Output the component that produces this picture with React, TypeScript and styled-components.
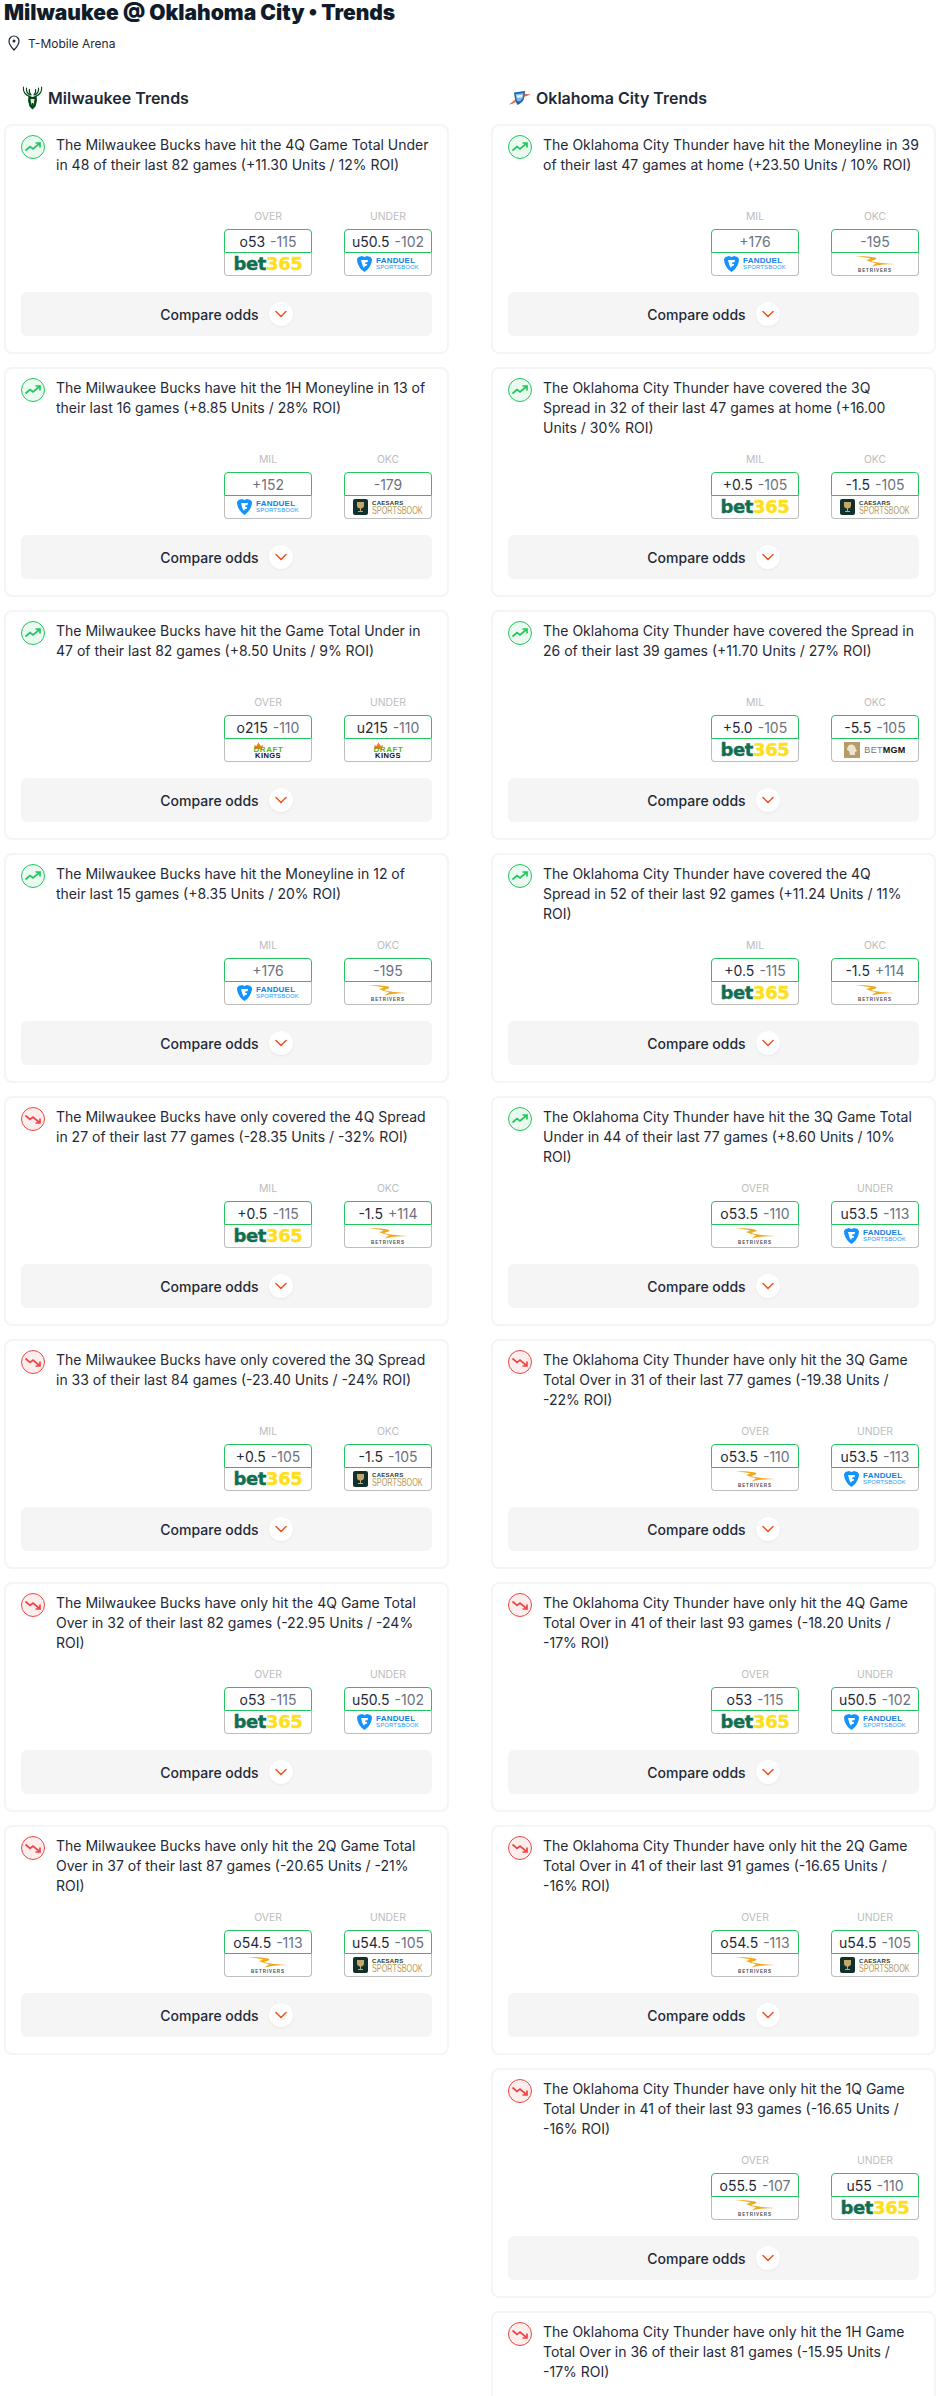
import type { FC } from "react";
import styled, { createGlobalStyle } from "styled-components";

const GlobalStyle = createGlobalStyle`
  html, body {
    margin: 0;
    height: 2396px;
    overflow: hidden;
    background: #ffffff;
  }
  body {
    font-family: Inter, "Noto Sans", sans-serif;
    color: #1f2937;
  }
  * {
    box-sizing: border-box;
  }
`;

const Page = styled.div`
  width: 939px;
  height: 2396px;
  overflow: hidden;
  padding: 0 3px 0 4px;
`;

const Title = styled.h1`
  margin: 0;
  font-size: 21px;
  line-height: 26px;
  font-weight: 900;
  color: #111c2a;
  white-space: nowrap;
`;

const Location = styled.div`
  display: flex;
  align-items: center;
  gap: 8px;
  height: 18px;
  margin-top: 8px;
  padding-left: 4px;
  font-size: 12px;
  color: #1f2937;
`;

const Columns = styled.div`
  display: grid;
  grid-template-columns: 445px 445px;
  justify-content: space-between;
  margin-top: 34px;
`;

const Column = styled.section`
  display: flex;
  flex-direction: column;
  gap: 13px;
`;

const ColumnHeading = styled.h2`
  display: flex;
  align-items: center;
  gap: 5px;
  height: 24px;
  margin: 0 0 1px;
  padding-left: 18px;
  font-size: 16px;
  font-weight: 600;
  color: #1f2937;
`;

const Card = styled.article`
  display: flex;
  flex-direction: column;
  height: 230px;
  padding: 9px 15px 15px;
  background: #ffffff;
  border: 2px solid #f5f5f5;
  border-radius: 8px;
`;

const Summary = styled.div`
  display: flex;
  gap: 11px;
  height: 74px;
`;

const TrendBadge = styled.div`
  flex: none;
  width: 24px;
  height: 24px;
`;

const SummaryText = styled.p`
  margin: 0;
  font-size: 14px;
  line-height: 20px;
  color: #1f2937;
`;

const Market = styled.div`
  display: flex;
  justify-content: flex-end;
  gap: 32px;
  margin-top: 1px;
`;

const Offer = styled.div`
  display: flex;
  flex-direction: column;
  align-items: center;
  width: 88px;
`;

const OfferLabel = styled.div`
  height: 14px;
  margin-bottom: 5px;
  font-size: 10.4px;
  line-height: 14px;
  color: #bdbdbd;
`;

const Price = styled.div`
  display: flex;
  align-items: center;
  justify-content: center;
  gap: 5px;
  width: 100%;
  height: 24px;
  font-size: 14px;
  color: #1f2937;
  border: 1px solid #22c55e;
  border-radius: 4px 4px 0 0;
`;

const Juice = styled.span`
  color: #6b7280;
`;

const BookPanel = styled.div`
  display: flex;
  align-items: center;
  justify-content: center;
  width: 100%;
  height: 23px;
  overflow: hidden;
  border: 1px solid #bdbdbd;
  border-top: 0;
  border-radius: 0 0 4px 4px;
`;

const CompareBar = styled.div`
  display: flex;
  align-items: center;
  justify-content: center;
  gap: 10px;
  height: 44px;
  margin-top: 16px;
  background: #f5f5f5;
  border-radius: 6px;
  font-size: 14px;
  font-weight: 500;
  color: #1f2937;
`;

const ChevronCircle = styled.div`
  display: flex;
  align-items: center;
  justify-content: center;
  width: 24px;
  height: 24px;
  background: #ffffff;
  border-radius: 50%;
  box-shadow: 0 1px 3px rgba(0, 0, 0, 0.06);
`;

const Bet365Mark = styled.div`
  font-family: "DejaVu Sans", sans-serif;
  font-size: 18px;
  font-weight: 700;
  line-height: 20px;
  letter-spacing: -0.4px;
  color: #126e51;
  -webkit-text-stroke: 0.4px currentColor;
`;

const Bet365Digits = styled.span`
  color: #ffdf1b;
`;

const LogoRow = styled.div`
  display: flex;
  align-items: center;
  gap: 4px;
`;

const WordStack = styled.div`
  display: flex;
  flex-direction: column;
  font-family: "Liberation Sans", sans-serif;
`;

const FanduelName = styled.div`
  font-size: 8px;
  line-height: 7px;
  font-weight: 700;
  letter-spacing: 0.2px;
  color: #1381e0;
`;

const FanduelSub = styled.div`
  font-size: 6px;
  line-height: 7px;
  letter-spacing: 0.1px;
  color: #1c9bff;
`;

const RiversStack = styled.div`
  display: flex;
  flex-direction: column;
  align-items: center;
  gap: 1px;
`;

const RiversName = styled.div`
  font-family: "Liberation Sans", sans-serif;
  font-size: 4.5px;
  line-height: 5px;
  font-weight: 700;
  letter-spacing: 0.9px;
  color: #4b4f54;
`;

const CaesarsName = styled.div`
  font-size: 6px;
  line-height: 6px;
  font-weight: 700;
  letter-spacing: 0.3px;
  color: #1b3a34;
`;

const CaesarsSub = styled.div`
  width: 51px;
  font-size: 11px;
  line-height: 9px;
  color: #b99a5b;
  white-space: nowrap;
  transform: scaleX(0.66);
  transform-origin: left center;
`;

const KingsLogo = styled.div`
  display: flex;
  flex-direction: column;
  align-items: center;
  width: 31px;
  font-family: "Liberation Sans", sans-serif;
  font-weight: 700;
`;

const KingsCrown = styled.svg`
  align-self: flex-start;
`;

const KingsDraft = styled.div`
  z-index: 1;
  align-self: flex-end;
  margin-top: -2px;
  font-size: 8px;
  line-height: 6px;
  letter-spacing: 0.6px;
  color: #61b510;
`;

const KingsName = styled.div`
  font-size: 7.5px;
  line-height: 5px;
  letter-spacing: 0.4px;
  color: #111111;
`;

const MgmWord = styled.div`
  font-family: "Liberation Sans", sans-serif;
  font-size: 9px;
  letter-spacing: 0.3px;
  color: #777777;
`;

const MgmStrong = styled.span`
  font-weight: 700;
  color: #111111;
`;

const PinIcon: FC = () => (
  <svg width="12" height="16" viewBox="0 0 12 16" fill="none">
    <path
      d="M6 15C4 12.8 1 9.8 1 6.2 1 3.3 3.2 1 6 1s5 2.3 5 5.2c0 3.6-3 6.6-5 8.8Z"
      stroke="#1f2937"
      strokeWidth="1.2"
    />
    <circle cx="6" cy="6" r="1.5" fill="#1f2937" />
  </svg>
);

const BucksLogo: FC = () => (
  <svg width="21" height="24" viewBox="0 0 21 24" fill="none">
    <g stroke="#00471b" strokeWidth="1.1" strokeLinecap="round">
      <path d="M1.500 1C.8 5 3 8.500 7.500 10.500" />
      <path d="M4.500 2C4 4.500 5 7 8 9" />
      <path d="M7.500 3.500C7 5.500 7.500 7.500 9 9" />
      <path d="M19.500 1C20.200 5 18 8.500 13.500 10.500" />
      <path d="M16.500 2C17 4.500 16 7 13 9" />
      <path d="M13.500 3.500C14 5.500 13.500 7.500 12 9" />
    </g>
    <path d="M6.500 9.500 10.500 11l4-1.500.5 5-1.500 6-3 3-3-3-1.500-6Z" fill="#00471b" />
    <path d="M8.500 13h4l-.7 5-1.300 1.500L9.200 18Z" fill="#eee1c6" />
    <path d="M9.700 17h1.600v2.500H9.700Z" fill="#00471b" />
  </svg>
);

const ThunderLogo: FC = () => (
  <svg width="22" height="16" viewBox="0 0 22 16">
    <path d="M0 14.500 7 9l1 2.500-5 2.500-3 .5Z" fill="#ef6c3a" />
    <path d="M14 3.500l8 1-7.500 2.500-.5-3.500Z" fill="#ef6c3a" />
    <path d="M5 2.500 16 1l-1 8c-1 2.500-4 5-6.500 6C6.500 12 5.500 7 5 2.500Z" fill="#1d5fa8" />
    <path d="M6.500 4 14.500 3l-.5 5-3 3.500L8 11 6.500 4Z" fill="#7eb6e6" />
    <path d="M7.500 5.500l6-.7-.3 2.400-5.200.5Z" fill="#f2f6fb" />
  </svg>
);

const TrendIcon: FC<{ $dir: "up" | "down" }> = ({ $dir }) => {
  const color = $dir === "up" ? "#22c55e" : "#ef4444";
  const fill = $dir === "up" ? "#eafaf0" : "#fdeeee";
  return (
    <svg width="24" height="24" viewBox="0 0 24 24" fill="none">
      <circle cx="12" cy="12" r="11.500" fill={fill} stroke={color} />
      {$dir === "up" ? (
        <path
          d="M4.500 15.500 9 11.500l3 2.500 6.500-5.500M14.500 8h4.500v4.500"
          stroke={color}
          strokeWidth="1.700"
        />
      ) : (
        <path
          d="M4.500 8.500 9 12.500l3-2.500 6.500 5.500M19 11.500V16h-4.500"
          stroke={color}
          strokeWidth="1.700"
        />
      )}
    </svg>
  );
};

const Chevron: FC = () => (
  <svg width="12" height="8" viewBox="0 0 12 8" fill="none">
    <path
      d="M1 1.500 6 6.500l5-5"
      stroke="#f4511e"
      strokeWidth="1.500"
      strokeLinecap="round"
      strokeLinejoin="round"
    />
  </svg>
);

type Book = "bet365" | "fanduel" | "rivers" | "caesars" | "kings" | "mgm";

const BookLogo: FC<{ book: Book }> = ({ book }) => {
  if (book === "bet365") {
    return (
      <Bet365Mark>
        bet<Bet365Digits>365</Bet365Digits>
      </Bet365Mark>
    );
  }
  if (book === "fanduel") {
    return (
      <LogoRow>
        <svg width="15" height="16" viewBox="0 0 15 16">
          <path
            d="M1.500 1 5 0l2.500 1L10 0l3.500 1L15 3c0 5-3 10-7.500 13C3 13 0 8 0 3Z"
            fill="#1493ff"
          />
          <path d="M4 4h7l-.5 2.200H8.500l-.3 1.800h2l-.8 2H7.800L7 12 5.500 9.500 4 4Z" fill="#fff" />
        </svg>
        <WordStack>
          <FanduelName>FANDUEL</FanduelName>
          <FanduelSub>SPORTSBOOK</FanduelSub>
        </WordStack>
      </LogoRow>
    );
  }
  if (book === "rivers") {
    return (
      <RiversStack>
        <svg width="40" height="11" viewBox="0 0 40 11">
          <path
            d="M0 .5C6 0 14 .5 20 1.500 22 2 22 3.500 19 4L16 5C19 6 24 7 40 8 30 8.500 22 8.800 17 10.500 18 9 20 8 21 7.200 18 6.500 14 5.500 11 4 14 3.200 15.500 3 15 2.400 12 1.500 6 .8 0 .5Z"
            fill="#f2a81d"
          />
        </svg>
        <RiversName>BETRIVERS</RiversName>
      </RiversStack>
    );
  }
  if (book === "caesars") {
    return (
      <LogoRow>
        <svg width="15" height="16" viewBox="0 0 15 16">
          <rect width="15" height="16" rx="2" fill="#12312c" />
          <path d="M4 3h7v3.500C11 8.500 9.500 9.500 8 9.500V12h2v1H5v-1h2V9.500C5.500 9.500 4 8.500 4 6.500Z" fill="#c5a868" />
        </svg>
        <WordStack>
          <CaesarsName>CAESARS</CaesarsName>
          <CaesarsSub>SPORTSBOOK</CaesarsSub>
        </WordStack>
      </LogoRow>
    );
  }
  if (book === "kings") {
    return (
      <KingsLogo>
        <KingsCrown width="11" height="7" viewBox="0 0 12 8">
          <path d="M1 3l2.500 1.500L6 .5l2.500 4L11 3l-1 5H2Z" fill="#f27b1a" />
        </KingsCrown>
        <KingsDraft>DRAFT</KingsDraft>
        <KingsName>KINGS</KingsName>
      </KingsLogo>
    );
  }
  return (
    <LogoRow>
      <svg width="16" height="16" viewBox="0 0 16 16">
        <rect width="16" height="16" fill="#b79c68" />
        <path d="M5 3c3-1.500 6 0 6.500 3L13 9l-2 1 0 3H6l-1-4-2-1c0-2 1-4 2-5Z" fill="#efe4cd" />
      </svg>
      <MgmWord>
        BET<MgmStrong>MGM</MgmStrong>
      </MgmWord>
    </LogoRow>
  );
};

type OfferData = { label: string; line?: string; price: string; book: Book };

type Trend = {
  text: string;
  dir: "up" | "down";
  offers?: [OfferData, OfferData];
};

const ou = (
  over: string,
  overPrice: string,
  overBook: Book,
  under: string,
  underPrice: string,
  underBook: Book
): [OfferData, OfferData] => [
  { label: "OVER", line: over, price: overPrice, book: overBook },
  { label: "UNDER", line: under, price: underPrice, book: underBook },
];

const sides = (
  milLine: string | undefined,
  milPrice: string,
  milBook: Book,
  okcLine: string | undefined,
  okcPrice: string,
  okcBook: Book
): [OfferData, OfferData] => [
  { label: "MIL", line: milLine, price: milPrice, book: milBook },
  { label: "OKC", line: okcLine, price: okcPrice, book: okcBook },
];

const milwaukee: Trend[] = [
  {
    text: "The Milwaukee Bucks have hit the 4Q Game Total Under in 48 of their last 82 games (+11.30 Units / 12% ROI)",
    dir: "up",
    offers: ou("o53", "-115", "bet365", "u50.5", "-102", "fanduel"),
  },
  {
    text: "The Milwaukee Bucks have hit the 1H Moneyline in 13 of their last 16 games (+8.85 Units / 28% ROI)",
    dir: "up",
    offers: sides(undefined, "+152", "fanduel", undefined, "-179", "caesars"),
  },
  {
    text: "The Milwaukee Bucks have hit the Game Total Under in 47 of their last 82 games (+8.50 Units / 9% ROI)",
    dir: "up",
    offers: ou("o215", "-110", "kings", "u215", "-110", "kings"),
  },
  {
    text: "The Milwaukee Bucks have hit the Moneyline in 12 of their last 15 games (+8.35 Units / 20% ROI)",
    dir: "up",
    offers: sides(undefined, "+176", "fanduel", undefined, "-195", "rivers"),
  },
  {
    text: "The Milwaukee Bucks have only covered the 4Q Spread in 27 of their last 77 games (-28.35 Units / -32% ROI)",
    dir: "down",
    offers: sides("+0.5", "-115", "bet365", "-1.5", "+114", "rivers"),
  },
  {
    text: "The Milwaukee Bucks have only covered the 3Q Spread in 33 of their last 84 games (-23.40 Units / -24% ROI)",
    dir: "down",
    offers: sides("+0.5", "-105", "bet365", "-1.5", "-105", "caesars"),
  },
  {
    text: "The Milwaukee Bucks have only hit the 4Q Game Total Over in 32 of their last 82 games (-22.95 Units / -24% ROI)",
    dir: "down",
    offers: ou("o53", "-115", "bet365", "u50.5", "-102", "fanduel"),
  },
  {
    text: "The Milwaukee Bucks have only hit the 2Q Game Total Over in 37 of their last 87 games (-20.65 Units / -21% ROI)",
    dir: "down",
    offers: ou("o54.5", "-113", "rivers", "u54.5", "-105", "caesars"),
  },
];

const oklahoma: Trend[] = [
  {
    text: "The Oklahoma City Thunder have hit the Moneyline in 39 of their last 47 games at home (+23.50 Units / 10% ROI)",
    dir: "up",
    offers: sides(undefined, "+176", "fanduel", undefined, "-195", "rivers"),
  },
  {
    text: "The Oklahoma City Thunder have covered the 3Q Spread in 32 of their last 47 games at home (+16.00 Units / 30% ROI)",
    dir: "up",
    offers: sides("+0.5", "-105", "bet365", "-1.5", "-105", "caesars"),
  },
  {
    text: "The Oklahoma City Thunder have covered the Spread in 26 of their last 39 games (+11.70 Units / 27% ROI)",
    dir: "up",
    offers: sides("+5.0", "-105", "bet365", "-5.5", "-105", "mgm"),
  },
  {
    text: "The Oklahoma City Thunder have covered the 4Q Spread in 52 of their last 92 games (+11.24 Units / 11% ROI)",
    dir: "up",
    offers: sides("+0.5", "-115", "bet365", "-1.5", "+114", "rivers"),
  },
  {
    text: "The Oklahoma City Thunder have hit the 3Q Game Total Under in 44 of their last 77 games (+8.60 Units / 10% ROI)",
    dir: "up",
    offers: ou("o53.5", "-110", "rivers", "u53.5", "-113", "fanduel"),
  },
  {
    text: "The Oklahoma City Thunder have only hit the 3Q Game Total Over in 31 of their last 77 games (-19.38 Units / -22% ROI)",
    dir: "down",
    offers: ou("o53.5", "-110", "rivers", "u53.5", "-113", "fanduel"),
  },
  {
    text: "The Oklahoma City Thunder have only hit the 4Q Game Total Over in 41 of their last 93 games (-18.20 Units / -17% ROI)",
    dir: "down",
    offers: ou("o53", "-115", "bet365", "u50.5", "-102", "fanduel"),
  },
  {
    text: "The Oklahoma City Thunder have only hit the 2Q Game Total Over in 41 of their last 91 games (-16.65 Units / -16% ROI)",
    dir: "down",
    offers: ou("o54.5", "-113", "rivers", "u54.5", "-105", "caesars"),
  },
  {
    text: "The Oklahoma City Thunder have only hit the 1Q Game Total Under in 41 of their last 93 games (-16.65 Units / -16% ROI)",
    dir: "down",
    offers: ou("o55.5", "-107", "rivers", "u55", "-110", "bet365"),
  },
  {
    // the rest of this card is below the fold
    text: "The Oklahoma City Thunder have only hit the 1H Game Total Over in 36 of their last 81 games (-15.95 Units / -17% ROI)",
    dir: "down",
  },
];

const TrendCard: FC<{ trend: Trend }> = ({ trend }) => (
  <Card>
    <Summary>
      <TrendBadge>
        <TrendIcon $dir={trend.dir} />
      </TrendBadge>
      <SummaryText>{trend.text}</SummaryText>
    </Summary>
    {trend.offers && (
      <>
        <Market>
          {trend.offers.map((offer) => (
            <Offer key={offer.label}>
              <OfferLabel>{offer.label}</OfferLabel>
              <Price>
                {offer.line && <span>{offer.line}</span>}
                <Juice>{offer.price}</Juice>
              </Price>
              <BookPanel>
                <BookLogo book={offer.book} />
              </BookPanel>
            </Offer>
          ))}
        </Market>
        <CompareBar>
          Compare odds
          <ChevronCircle>
            <Chevron />
          </ChevronCircle>
        </CompareBar>
      </>
    )}
  </Card>
);

const App: FC = () => (
  <Page>
    <GlobalStyle />
    <Title>Milwaukee @ Oklahoma City • Trends</Title>
    <Location>
      <PinIcon />
      T-Mobile Arena
    </Location>
    <Columns>
      <Column>
        <ColumnHeading>
          <BucksLogo />
          Milwaukee Trends
        </ColumnHeading>
        {milwaukee.map((trend) => (
          <TrendCard key={trend.text} trend={trend} />
        ))}
      </Column>
      <Column>
        <ColumnHeading>
          <ThunderLogo />
          Oklahoma City Trends
        </ColumnHeading>
        {oklahoma.map((trend) => (
          <TrendCard key={trend.text} trend={trend} />
        ))}
      </Column>
    </Columns>
  </Page>
);

export default App;
